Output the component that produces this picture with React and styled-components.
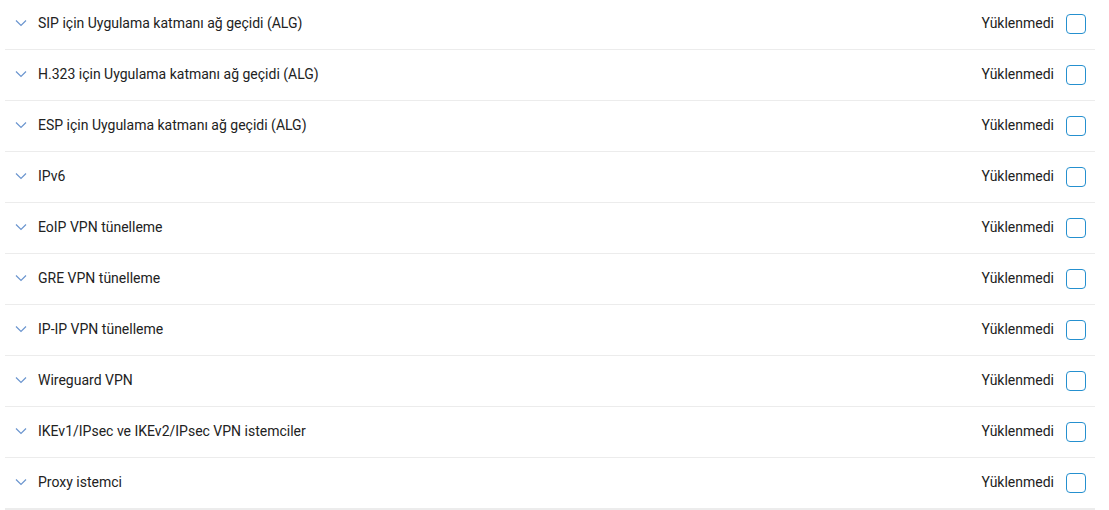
import React from "react";
import styled, { createGlobalStyle } from "styled-components";

const Global = createGlobalStyle`
  html, body { margin: 0; padding: 0; background: #fff; }
  body { font-family: Roboto, "Liberation Sans", Arial, sans-serif; }
`;

const List = styled.div`
  margin: -1px 14px 0 5px;
  display: flex;
  flex-direction: column;
`;

const Row = styled.div`
  height: 48px;
  padding-bottom: 2px;
  display: flex;
  align-items: center;
  border-bottom: ${(p) => (p.$last ? "2px solid #ececec" : "1px solid #ececec")};
  box-sizing: content-box;
`;

const Chevron = styled.span`
  display: flex;
  width: 12px;
  margin-left: 10px;
  margin-right: 11px;
  color: #6b95cf;
`;

const Title = styled.span`
  flex: 1;
  font-size: 14px;
  color: #222;
`;

const Status = styled.span`
  font-size: 14px;
  color: #222;
  margin-right: 12px;
`;

const Box = styled.span`
  width: 18px;
  height: 18px;
  border: 1.5px solid #2590cf;
  border-radius: 4px;
  margin-right: 9px;
  margin-top: 1px;
`;

const items = [
  "SIP için Uygulama katmanı ağ geçidi (ALG)",
  "H.323 için Uygulama katmanı ağ geçidi (ALG)",
  "ESP için Uygulama katmanı ağ geçidi (ALG)",
  "IPv6",
  "EoIP VPN tünelleme",
  "GRE VPN tünelleme",
  "IP-IP VPN tünelleme",
  "Wireguard VPN",
  "IKEv1/IPsec ve IKEv2/IPsec VPN istemciler",
  "Proxy istemci",
];

export default function App() {
  return (
    <>
      <Global />
      <List>
        {items.map((t, i) => (
          <Row key={t} $last={i === items.length - 1}>
            <Chevron>
              <svg width="12" height="8" viewBox="0 0 12 8" fill="none">
                <path d="M1 1.5 L6 6.5 L11 1.5" stroke="currentColor" strokeWidth="1.2" />
              </svg>
            </Chevron>
            <Title>{t}</Title>
            <Status>Yüklenmedi</Status>
            <Box />
          </Row>
        ))}
      </List>
    </>
  );
}
